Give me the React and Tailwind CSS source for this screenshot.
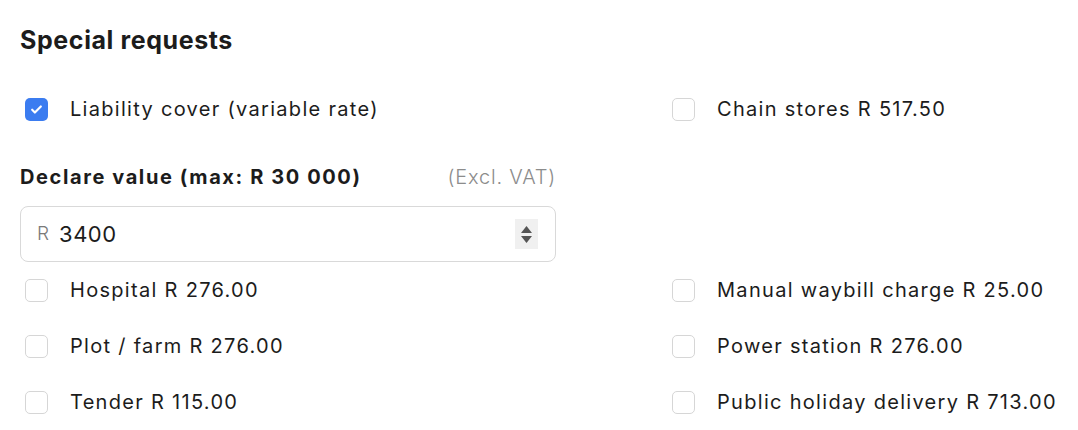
import React from "react";

const font = { fontFamily: 'Inter, "Open Sans", sans-serif' };

function Box({ checked }) {
  if (checked) {
    return (
      <span className="ml-[5px] flex h-[23px] w-[23px] shrink-0 items-center justify-center rounded-[5px] bg-[#3b7cf0]">
        <svg width="13" height="13" viewBox="0 0 24 24" fill="none" stroke="white" strokeWidth="4" strokeLinecap="round" strokeLinejoin="round">
          <path d="M4 12.5l5 5L20 6.5" />
        </svg>
      </span>
    );
  }
  return <span className="ml-[5px] block h-[23px] w-[23px] shrink-0 rounded-[5px] border border-[#d6d6d6] bg-white" />;
}

function Item({ label, checked }) {
  return (
    <label className="flex h-[56px] items-center gap-[22px] whitespace-nowrap text-[20px] tracking-[1.3px] text-[#1c1c1c]">
      <Box checked={checked} />
      <span>{label}</span>
    </label>
  );
}

export default function App() {
  return (
    <div className="h-[430px] w-[1078px] bg-white px-5" style={font}>
      <h2 className="pt-[26px] text-[25px] font-bold leading-[28px] tracking-[0.6px] text-[#1c1c1c]">Special requests</h2>
      <div className="mt-[27px] grid grid-cols-[536px_1fr] gap-x-[111px]">
        <Item label="Liability cover (variable rate)" checked />
        <Item label="Chain stores R 517.50" />
        <div>
          <div className="mt-[28px] flex h-[24px] items-center justify-between whitespace-nowrap">
            <span className="text-[20px] font-bold tracking-[1.6px] text-[#1c1c1c]">Declare value (max: R 30 000)</span>
            <span className="text-[20px] font-light tracking-[0.8px] text-[#8c8c8c]">(Excl. VAT)</span>
          </div>
          <div className="mt-[17px] flex h-[56px] items-center rounded-[8px] border border-[#d9d9d9] pl-[16px] pr-[17px]">
            <span className="text-[19px] font-light text-[#7a7a7a]">R</span>
            <span className="ml-[10px] text-[22px] tracking-[0.5px] text-[#1c1c1c]">3400</span>
            <span className="ml-auto flex h-[30px] w-[23px] flex-col items-center justify-center gap-[3px] bg-[#f0f0f0]">
              <svg width="11" height="7" viewBox="0 0 11 7"><path d="M5.5 0L11 7H0z" fill="#555" /></svg>
              <svg width="11" height="7" viewBox="0 0 11 7"><path d="M0 0h11L5.5 7z" fill="#555" /></svg>
            </span>
          </div>
        </div>
        <div />
        <Item label="Hospital R 276.00" />
        <Item label="Manual waybill charge R 25.00" />
        <Item label="Plot / farm R 276.00" />
        <Item label="Power station R 276.00" />
        <Item label="Tender R 115.00" />
        <Item label="Public holiday delivery R 713.00" />
      </div>
    </div>
  );
}
